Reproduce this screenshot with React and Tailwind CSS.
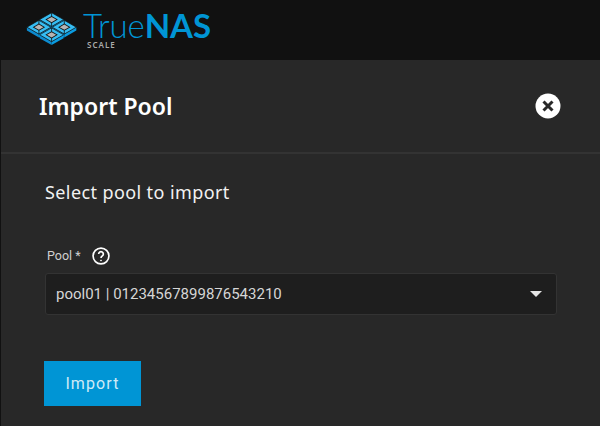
import React from "react";

const Cell = ({ cx, cy }) => {
  const w = 12;
  const h = 6.9;
  const d = 3.4;
  return (
    <g>
      {/* side faces */}
      <polygon points={`${cx - w},${cy} ${cx},${cy + h} ${cx},${cy + h + d} ${cx - w},${cy + d}`} fill="#0c8bd0" />
      <polygon points={`${cx + w},${cy} ${cx},${cy + h} ${cx},${cy + h + d} ${cx + w},${cy + d}`} fill="#0a9be0" />
      {/* top faces, split by thin dark seams */}
      <polygon points={`${cx - w},${cy} ${cx},${cy - h} ${cx + w},${cy} ${cx},${cy + h}`} fill="#35bdf3" stroke="#111111" strokeWidth="0.7" />
      <path d={`M${cx} ${cy - h} V${cy - 3} M${cx} ${cy + h} V${cy + 3}`} stroke="#111111" strokeWidth="0.8" />
      {/* well */}
      <polygon points={`${cx - 6.2},${cy} ${cx},${cy - 3.6} ${cx + 6.2},${cy} ${cx},${cy + 3.6}`} fill="#111111" />
      <polygon points={`${cx - 4.6},${cy} ${cx},${cy - 2.6} ${cx + 4.6},${cy} ${cx},${cy + 2.6}`} fill="#b4b4b4" />
    </g>
  );
};

const Logo = () => (
  <svg width="54" height="38" viewBox="24 9 54 38" className="shrink-0">
    <Cell cx={50.6} cy={19.6} />
    <Cell cx={37.9} cy={27.2} />
    <Cell cx={63.3} cy={27.2} />
    <Cell cx={50.6} cy={34.8} />
  </svg>
);

const App = () => {
  return (
    <div className="w-[600px] h-[426px] overflow-hidden bg-[#111111] font-['Roboto',sans-serif]">
      {/* Top bar */}
      <div className="h-[60px] pl-[25px] pt-[9px] flex items-start gap-[4px] bg-[#111111]">
        <Logo />
        <div className="flex flex-col items-start">
          <div className="h-[32px] text-[33px] leading-[32px] text-[#0095d5] font-['Lato',sans-serif] tracking-[-0.1px]">
            <span className="font-light">True</span>
            <span className="font-bold">NAS</span>
          </div>
          <div className="pl-[4px] text-[8px] leading-[8px] font-semibold tracking-[1px] text-[#aaaaaa] font-['Noto_Sans',sans-serif]">
            SCALE
          </div>
        </div>
      </div>

      {/* Slide-in form */}
      <div className="ml-px h-[366px] bg-[#282828] text-white">
        <div className="h-[94px] pl-[38px] pr-[39px] flex items-center justify-between border-b-2 border-[#333333]">
          <h1 className="text-[23px] font-semibold font-['Noto_Sans',sans-serif]">Import Pool</h1>
          <svg width="26" height="26" viewBox="0 0 26 26">
            <circle cx="13" cy="13" r="12.5" fill="#ffffff" />
            <path d="M8.5 8.5 L17.5 17.5 M17.5 8.5 L8.5 17.5" stroke="#282828" strokeWidth="3" />
          </svg>
        </div>

        <div className="pl-[44px] pr-[43px]">
          <div className="pt-[26px] text-[18px] leading-[25px] tracking-[0.4px] text-[#f2f2f2] font-['Noto_Sans',sans-serif]">
            Select pool to import
          </div>

          <div className="mt-[41px] flex items-center h-[20px] pl-[2px] text-[12.5px] text-[#d0d0d0]">
            <span>Pool *</span>
            <svg width="20" height="20" viewBox="0 0 24 24" className="ml-[10px]" fill="none" stroke="#ffffff" strokeWidth="2">
              <circle cx="12" cy="12" r="9.5" />
              <path d="M9.2 9.6a2.8 2.8 0 1 1 4.4 2.3c-1 .7-1.6 1.2-1.6 2.6" />
              <circle cx="12" cy="17.4" r="0.6" fill="#ffffff" strokeWidth="1" />
            </svg>
          </div>

          <div className="mt-[7px] h-[42px] pl-[10px] pr-[14px] flex items-center justify-between bg-[#1e1e1e] border border-[#333333] rounded-[3px] text-[15px] text-[#d6d6d6]">
            <span>pool01 | 01234567899876543210</span>
            <span className="w-0 h-0 border-x-[6px] border-x-transparent border-t-[6px] border-t-[#e6e6e6]" />
          </div>

          <button className="mt-[46px] -ml-px w-[97px] h-[45px] bg-[#0095d5] text-[16px] text-[#cfeaf7] tracking-[1.1px]">
            Import
          </button>
        </div>
      </div>
    </div>
  );
};

export default App;
